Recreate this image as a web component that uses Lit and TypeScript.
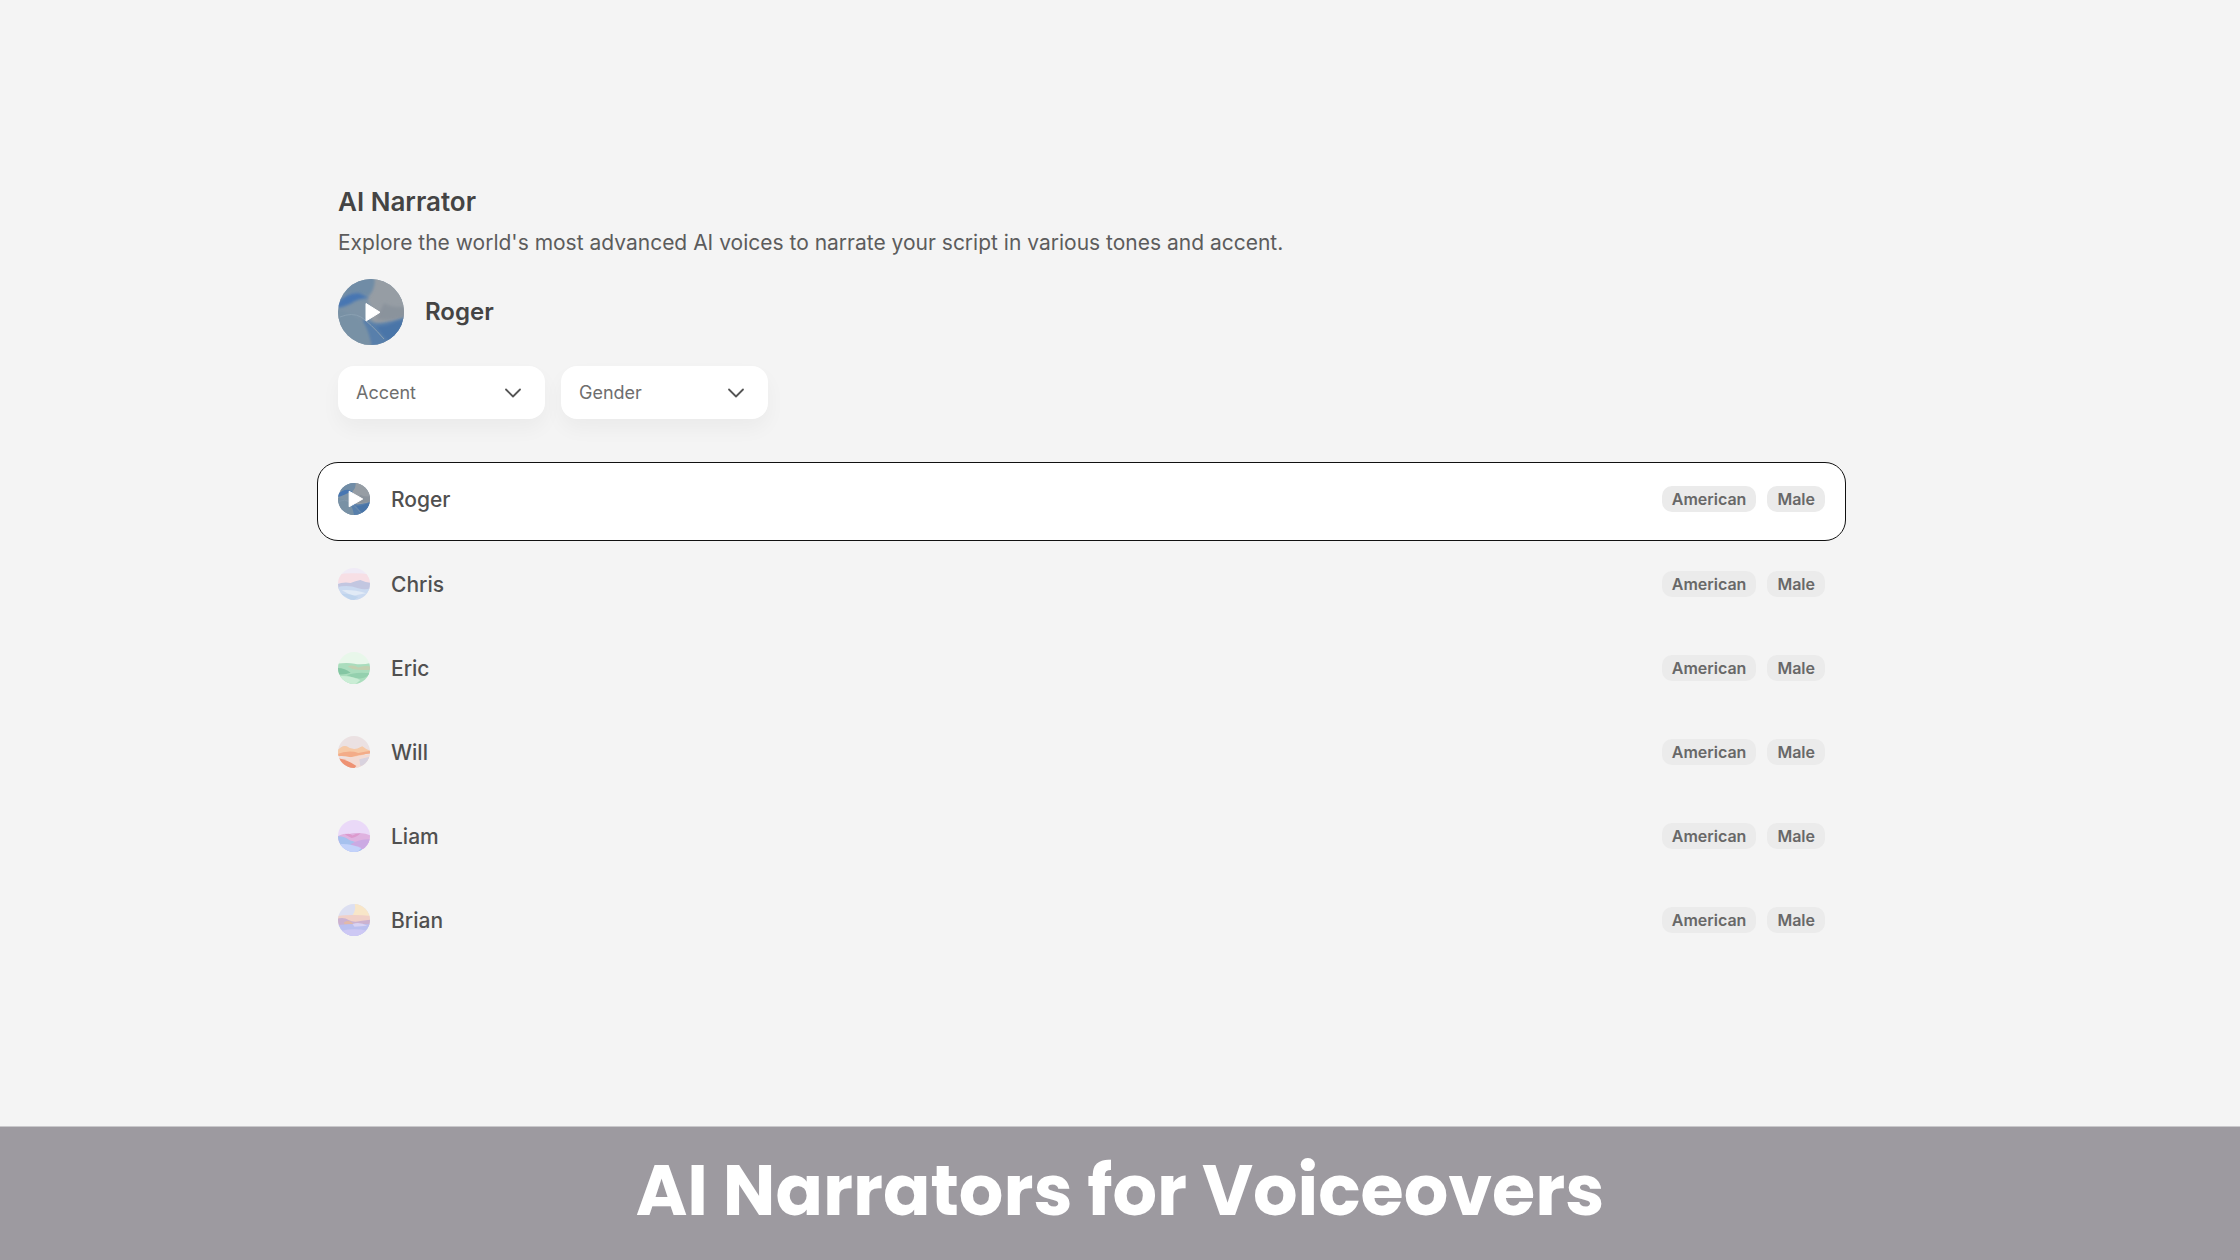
import { LitElement, html, css, svg } from "lit";
import { customElement, property, state } from "lit/decorators.js";
import { classMap } from "lit/directives/class-map.js";

type Voice = { name: string; accent: string; gender: string };

const VOICES: Voice[] = ["Roger", "Chris", "Eric", "Will", "Liam", "Brian"].map((name) => ({
  name,
  accent: "American",
  gender: "Male",
}));

const ART: Record<string, unknown> = {
  Roger: svg`
    <rect width="66" height="66" fill="#7d93a6"/>
    <path d="M36 -4H70V38Q48 46 36 44Q30 38 33 28Q28 20 31 16Q36 10 36 -4Z" fill="#969da4" filter="url(#soft)"/>
    <path d="M46 24Q56 30 70 27V37Q50 43 38 40Z" fill="#8a939c" filter="url(#soft)"/>
    <path d="M-4 4Q14 0 36 -4Q38 10 30 17Q14 10 -4 20Z" fill="#6f8ca6" filter="url(#soft)"/>
    <path d="M0 23Q10 13 21 14Q26 16 31 19Q20 19 12 25Q6 28 -2 29Z" fill="#4676b2" filter="url(#soft)"/>
    <path d="M28 40Q36 47 50 43Q58 42 70 37V70H34Q28 52 24 42Z" fill="#587fab" filter="url(#soft)"/>
    <path d="M50 46Q58 42 70 40V54Q58 60 50 62Q44 56 38 48Z" fill="#4a75a8" filter="url(#soft)"/>
    <path d="M-4 30Q16 33 26 45Q32 54 33 70H-4Z" fill="#7891a5" filter="url(#soft)"/>
    <path d="M2 38Q14 33 23 38Q32 44 46 60" fill="none" stroke="#8aa0b2" stroke-width="1"/>`,
  Chris: svg`
    <rect width="66" height="66" fill="#f0ebf6"/>
    <path d="M-4 14Q30 8 70 14V32H-4Z" fill="#f7dfe5" filter="url(#soft)"/>
    <path d="M-4 34Q12 28 26 31Q36 27 46 25Q56 30 70 31V46H-4Z" fill="#c2c6e0" filter="url(#soft)"/>
    <path d="M-4 40Q20 34 40 41T70 38V70H-4Z" fill="#cbdaf0" filter="url(#soft)"/>
    <path d="M8 46Q30 44 58 52Q44 54 30 58Z" fill="#e1eaf6" filter="url(#soft)"/>
    <path d="M6 53Q24 52 42 60L30 68Z" fill="#bfd4ed" filter="url(#soft)"/>`,
  Eric: svg`
    <rect width="66" height="66" fill="#e8f7ea"/>
    <path d="M-4 24Q20 21 34 24T70 22V70H-4Z" fill="#aaddbd" filter="url(#soft)"/>
    <path d="M20 30Q30 25 42 32Q54 26 70 31V36Q50 39 30 35Z" fill="#c2d0b0" filter="url(#soft)"/>
    <path d="M-4 33Q14 32 26 43Q14 48 -2 46Z" fill="#84c6a3" filter="url(#soft)"/>
    <path d="M18 48Q36 40 68 44Q56 57 40 54Q28 52 18 48Z" fill="#94d0ae" filter="url(#soft)"/>
    <path d="M2 50Q24 48 46 58L32 70H8Z" fill="#caedd5" filter="url(#soft)"/>`,
  Will: svg`
    <rect width="66" height="66" fill="#ebe1e2"/>
    <path d="M-4 32Q8 18 18 21Q28 29 40 26L50 21Q58 28 70 32L40 44L-4 40Z" fill="#f6c9a6" filter="url(#soft)"/>
    <path d="M-4 38Q22 28 42 35Q54 33 70 30V36Q44 38 26 44Q12 40 -4 42Z" fill="#f3ac88" filter="url(#soft)"/>
    <path d="M-4 46Q24 46 44 40L70 38V70H-4Z" fill="#f3dbd3" filter="url(#soft)"/>
    <path d="M0 46Q20 49 38 62L30 70H-4Z" fill="#ee9273" filter="url(#soft)"/>
    <path d="M44 48L70 42V58L46 62Z" fill="#d8d2de" filter="url(#soft)"/>`,
  Liam: svg`
    <rect width="66" height="66" fill="#ead9f8"/>
    <path d="M-4 36Q10 26 22 29Q34 26 42 27Q54 26 70 33V50H-4Z" fill="#dfb2e0" filter="url(#soft)"/>
    <path d="M14 30Q24 26 30 32Q38 27 46 28Q38 36 28 37Z" fill="#dc99cd" filter="url(#soft)"/>
    <path d="M-4 34Q12 32 24 42Q36 47 50 46V70H-4Z" fill="#a6c1ee" filter="url(#soft)"/>
    <path d="M26 50Q46 38 70 40V60H36Z" fill="#cbaae3" filter="url(#soft)"/>
    <path d="M2 50Q24 48 48 58L36 70H8Z" fill="#c3d2fa" filter="url(#soft)"/>`,
  Brian: svg`
    <rect width="66" height="66" fill="#dcdff1"/>
    <path d="M34 -4H70V34H20Q40 20 34 -4Z" fill="#f8e6c8" filter="url(#soft)"/>
    <path d="M-4 25Q30 20 70 25V38H-4Z" fill="#f0d0c8" filter="url(#soft)"/>
    <path d="M-4 31Q12 26 22 33Q32 39 46 35L70 32V46H-4Z" fill="#cbb2d0" filter="url(#soft)"/>
    <path d="M12 38Q24 31 32 41L14 43Z" fill="#e2b9a8" filter="url(#soft)"/>
    <path d="M-4 44Q30 40 70 42V70H-4Z" fill="#bbc0ef" filter="url(#soft)"/>
    <path d="M30 41Q46 36 60 45L34 47Z" fill="#d9d3f2" filter="url(#soft)"/>
    <path d="M8 55Q34 49 60 55L40 70H20Z" fill="#cdc8f4" filter="url(#soft)"/>`,
};

@customElement("voice-orb")
class VoiceOrb extends LitElement {
  static styles = css`
    :host {
      display: block;
      line-height: 0;
    }
    .orb {
      width: 100%;
      height: 100%;
      border-radius: 50%;
      display: block;
    }
  `;

  @property() name = "";
  @property() play = "";

  render() {
    const triangle =
      this.play === "large"
        ? svg`<path d="M28 24.500V42L42 33.300Z" fill="#fff" stroke="#fff" stroke-width="1" stroke-linejoin="round"/>`
        : this.play === "small"
          ? svg`<path d="M23 17V49L51 33Z" fill="#fff" stroke="#fff" stroke-width="2" stroke-linejoin="round"/>`
          : "";
    return html`<svg class="orb" viewBox="0 0 66 66" aria-hidden="true">
      <defs>
        <filter id="soft" x="-30%" y="-30%" width="160%" height="160%">
          <feGaussianBlur stdDeviation="1.6" />
        </filter>
      </defs>
      ${ART[this.name]} ${triangle}
    </svg>`;
  }
}

@customElement("filter-select")
class FilterSelect extends LitElement {
  static styles = css`
    :host {
      display: block;
      width: 207px;
    }
    .field {
      display: grid;
      align-items: center;
      border-radius: 16px;
      background: #fff;
      box-shadow: 0 10px 20px rgba(0, 0, 0, 0.04);
    }
    .select,
    .chevron {
      grid-area: 1 / 1;
    }
    .select {
      appearance: none;
      width: 100%;
      height: 53px;
      padding: 0 56px 0 18px;
      border: 0;
      border-radius: 16px;
      background: transparent;
      color: #6e6e6e;
      font: 400 18px "Inter", sans-serif;
    }
    .chevron {
      width: 20px;
      height: 20px;
      margin-right: 22px;
      justify-self: end;
      pointer-events: none;
    }
  `;

  @property() label = "";
  @property({ attribute: false }) options: string[] = [];

  render() {
    return html`<div class="field">
      <select class="select" aria-label=${this.label}>
        <option value="">${this.label}</option>
        ${this.options.map((o) => html`<option>${o}</option>`)}
      </select>
      <svg class="chevron" viewBox="0 0 20 20" aria-hidden="true">
        <path d="M3 6.500L10 13.500L17 6.500" fill="none" stroke="#555" stroke-width="1.800" stroke-linecap="round" stroke-linejoin="round" />
      </svg>
    </div>`;
  }
}

@customElement("app-root")
class AppRoot extends LitElement {
  static styles = css`
    :host {
      display: block;
      font-family: "Inter", sans-serif;
      color: #4a4a4a;
      background: #f4f4f4;
    }
    .page {
      display: flex;
      flex-direction: column;
      min-height: 100vh;
    }
    .main {
      flex: 1;
      padding: 185px 394px 0 317px;
    }
    .intro {
      display: flex;
      flex-direction: column;
      padding: 0 21px;
    }
    .title {
      margin: 0;
      font-size: 26px;
      line-height: 34px;
      font-weight: 600;
      color: #444;
    }
    .lead {
      margin: 8px 0 20px;
      font-size: 21px;
      line-height: 32px;
      color: #5c5c5c;
    }
    .current {
      display: flex;
      align-items: center;
      gap: 21px;
      margin-bottom: 21px;
    }
    .current-name {
      font-size: 24px;
      line-height: 32px;
      font-weight: 600;
      color: #444;
    }
    .play,
    .pick {
      margin: 0;
      padding: 0;
      border: 0;
      background: none;
      font: inherit;
      color: inherit;
      cursor: pointer;
    }
    .orb-large {
      width: 66px;
      height: 66px;
    }
    .orb-small {
      width: 32px;
      height: 32px;
    }
    .filters {
      display: flex;
      gap: 16px;
    }
    .list {
      display: flex;
      flex-direction: column;
      gap: 5px;
      margin: 43px 0 0;
      padding: 0;
      list-style: none;
    }
    .row {
      display: flex;
      align-items: flex-start;
      gap: 21px;
      padding: 20px 20px 25px;
      border: 1px solid transparent;
      border-radius: 21px;
    }
    .selected {
      margin-bottom: 1px;
      background: #fff;
      border-color: #111;
    }
    .pick {
      flex: 1;
      display: flex;
      align-items: center;
      gap: 11px;
      height: 32px;
      text-align: left;
    }
    .name {
      flex: 1;
      font-size: 21px;
      font-weight: 500;
      color: #505050;
    }
    .tag {
      padding: 0 10px;
      border-radius: 10px;
      background: #ebebeb;
      color: #686868;
      font-size: 16px;
      line-height: 26px;
      font-weight: 600;
    }
    .banner {
      display: flex;
      justify-content: center;
      padding: 22px 0 27px;
      background: #9d9aa0;
      border-top: 1px solid #c9c8cb;
    }
    .banner-text {
      margin: 0;
      color: #fff;
      font-family: "Poppins", "Inter", sans-serif;
      font-size: 70px;
      line-height: 84px;
      font-weight: 700;
    }
  `;

  @state() private selected = "Roger";

  render() {
    return html`<div class="page">
      <main class="main">
        <section class="intro">
          <h1 class="title">AI Narrator</h1>
          <p class="lead">
            Explore the world's most advanced AI voices to narrate your script in various tones and accent.
          </p>
          <div class="current">
            <button class="play" aria-label="Play ${this.selected}">
              <voice-orb class="orb-large" name=${this.selected} play="large"></voice-orb>
            </button>
            <span class="current-name">${this.selected}</span>
          </div>
          <div class="filters">
            <filter-select label="Accent" .options=${["American"]}></filter-select>
            <filter-select label="Gender" .options=${["Male"]}></filter-select>
          </div>
        </section>
        <ul class="list">
          ${VOICES.map((v) => {
            const on = v.name === this.selected;
            return html`<li class=${classMap({ row: true, selected: on })}>
              <button class="play" aria-label="Play ${v.name}">
                <voice-orb class="orb-small" name=${v.name} play=${on ? "small" : ""}></voice-orb>
              </button>
              <button class="pick" aria-pressed=${on} @click=${() => (this.selected = v.name)}>
                <span class="name">${v.name}</span>
                <span class="tag">${v.accent}</span>
                <span class="tag">${v.gender}</span>
              </button>
            </li>`;
          })}
        </ul>
      </main>
      <footer class="banner">
        <h2 class="banner-text">AI Narrators for Voiceovers</h2>
      </footer>
    </div>`;
  }
}
